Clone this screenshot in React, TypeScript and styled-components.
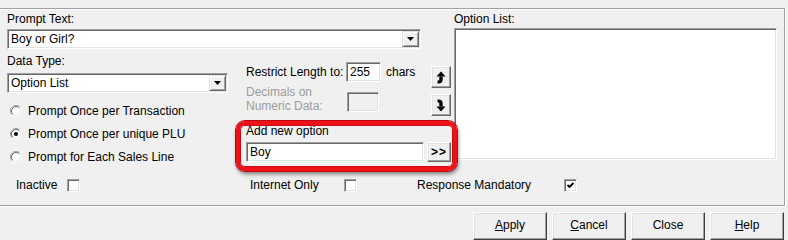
import React from "react";
import styled, { createGlobalStyle } from "styled-components";

const GlobalStyle = createGlobalStyle`
  html, body {
    margin: 0;
    padding: 0;
    background: #f0f0f0;
  }
  body {
    font-family: "Liberation Sans", Arial, sans-serif;
    font-size: 12px;
    color: #000;
  }
`;

const Page = styled.div`
  width: 788px;
  height: 240px;
  box-sizing: border-box;
  padding-top: 8px;
  overflow: hidden;
  background: #f0f0f0;
`;

const Frame = styled.div`
  position: relative;
  width: 785px;
  height: 198px;
  box-sizing: border-box;
  padding-left: 7px;
  border-top: 1px solid #a0a0a0;
  border-right: 1px solid #a0a0a0;
  border-bottom: 1px solid #a0a0a0;
  box-shadow: inset 0 1px 0 #fff, 1px 0 0 #fff, 0 1px 0 #fff;
  display: flex;
  flex-direction: column;
`;

const TopRow = styled.div`
  display: flex;
  align-items: flex-start;
`;

const Main = styled.div`
  width: 444px;
  padding-top: 3px;
  display: flex;
  flex-direction: column;
`;

const Label = styled.div<{ $mt?: number; $dim?: boolean }>`
  margin-top: ${({ $mt }) => $mt || 0}px;
  line-height: 14px;
  height: 14px;
  white-space: nowrap;
  color: ${({ $dim }) => ($dim ? "#a0a0a0" : "#000")};
`;

const Sunken = styled.div<{ $w: number; $h?: number; $mt?: number; $off?: boolean }>`
  width: ${({ $w }) => $w}px;
  height: ${({ $h }) => $h || 20}px;
  margin-top: ${({ $mt }) => $mt || 0}px;
  box-sizing: border-box;
  flex: none;
  display: flex;
  align-items: center;
  padding-left: 3px;
  background: ${({ $off }) => ($off ? "#f0f0f0" : "#fff")};
  border: 1px solid;
  border-color: #a0a0a0 #fff #fff #a0a0a0;
  box-shadow: inset 1px 1px 0 #696969, inset -1px -1px 0 #e3e3e3;
  line-height: 14px;
  white-space: nowrap;
`;

const ComboText = styled.span`
  flex: 1;
`;

const DropButton = styled.div`
  width: 17px;
  height: 16px;
  margin-right: 1px;
  box-sizing: border-box;
  display: flex;
  align-items: center;
  justify-content: center;
  background: #f0f0f0;
  border: 1px solid;
  border-color: #e3e3e3 #696969 #696969 #e3e3e3;
  box-shadow: inset 1px 1px 0 #fff, inset -1px -1px 0 #a0a0a0;
`;

const DataRow = styled.div`
  display: flex;
`;

const ColA = styled.div`
  width: 221px;
  display: flex;
  flex-direction: column;
`;

const RadioRow = styled.div<{ $mt?: number }>`
  height: 23px;
  margin-top: ${({ $mt }) => $mt || 0}px;
  display: flex;
  align-items: center;
  padding-left: 3px;
  gap: 6px;
  white-space: nowrap;
`;

const ColB = styled.div`
  margin-left: 18px;
  display: flex;
  flex-direction: column;
`;

const UpperB = styled.div`
  display: flex;
`;

const Fields = styled.div`
  width: 175px;
  display: flex;
  flex-direction: column;
`;

const FieldRow = styled.div<{ $mt: number; $top?: boolean }>`
  margin-top: ${({ $mt }) => $mt}px;
  display: flex;
  align-items: ${({ $top }) => ($top ? "flex-start" : "center")};
`;

const FieldLabel = styled.div<{ $w: number; $dim?: boolean }>`
  width: ${({ $w }) => $w}px;
  flex: none;
  line-height: 14px;
  white-space: nowrap;
  color: ${({ $dim }) => ($dim ? "#9c9c9c" : "#000")};
`;

const Unit = styled.span`
  margin-left: 5px;
`;

const Arrows = styled.div`
  margin-left: 10px;
  display: flex;
  flex-direction: column;
`;

const RaisedButton = styled.div<{ $w: number; $h: number; $mt?: number; $ml?: number }>`
  width: ${({ $w }) => $w}px;
  height: ${({ $h }) => $h}px;
  margin-top: ${({ $mt }) => $mt || 0}px;
  margin-left: ${({ $ml }) => $ml || 0}px;
  box-sizing: border-box;
  flex: none;
  display: flex;
  align-items: center;
  justify-content: center;
  background: #f0f0f0;
  border: 1px solid;
  border-color: #fff #696969 #696969 #fff;
  box-shadow: inset -1px -1px 0 #a0a0a0, inset 1px 1px 0 #e3e3e3;
  font-size: 12px;
  line-height: 14px;
`;

const ListCol = styled.div`
  margin-left: 3px;
  padding-top: 3px;
  display: flex;
  flex-direction: column;
`;

const ListBox = styled.div`
  width: 323px;
  height: 132px;
  margin-top: 2px;
  box-sizing: border-box;
  background: #fff;
  border: 1px solid;
  border-color: #a0a0a0 #fff #fff #a0a0a0;
  box-shadow: inset 1px 1px 0 #696969, inset -1px -1px 0 #e3e3e3;
`;

const BottomRow = styled.div`
  margin-top: 10px;
  padding-left: 9px;
  height: 14px;
  display: flex;
  align-items: center;
`;

const CheckField = styled.div<{ $w: number }>`
  width: ${({ $w }) => $w}px;
  flex: none;
  display: flex;
  align-items: center;
`;

const CheckBox = styled.div`
  width: 13px;
  height: 13px;
  box-sizing: border-box;
  flex: none;
  display: flex;
  align-items: center;
  justify-content: center;
  background: #fff;
  border: 1px solid;
  border-color: #a0a0a0 #fff #fff #a0a0a0;
  box-shadow: inset 1px 1px 0 #696969, inset -1px -1px 0 #e3e3e3;
`;

const Highlight = styled.div`
  position: absolute;
  left: 236px;
  top: 112px;
  width: 221px;
  height: 50px;
  box-sizing: border-box;
  border: 4px solid #f01018;
  border-radius: 9px;
  box-shadow: 0 0 0 1px #b80a10, 1px 3px 4px rgba(0, 0, 0, 0.5),
    inset 0 0 0 1px #c80c12;
  pointer-events: none;
`;

const ButtonRow = styled.div`
  margin-top: 6px;
  padding-right: 4px;
  display: flex;
  justify-content: flex-end;
  gap: 5px;
`;

const DialogButton = styled(RaisedButton)`
  border-color: #fff #404040 #404040 #fff;
  box-shadow: inset -1px -1px 0 #a0a0a0, inset 1px 1px 0 #e3e3e3;
  padding-bottom: 2px;
`;

const Bold = styled.span`
  font-weight: bold;
  letter-spacing: 1px;
`;

const Triangle = () => (
  <svg width="7" height="4" viewBox="0 0 7 4">
    <polygon points="0,0 7,0 3.5,4" fill="#000" />
  </svg>
);

const Combo: React.FC<{ w: number; mt?: number; value: string }> = ({ w, mt, value }) => (
  <Sunken $w={w} $mt={mt}>
    <ComboText>{value}</ComboText>
    <DropButton>
      <Triangle />
    </DropButton>
  </Sunken>
);

const Radio: React.FC<{ checked?: boolean }> = ({ checked }) => (
  <svg width="12" height="12" viewBox="0 0 12 12">
    <circle cx="6" cy="6" r="5" fill="#fff" />
    <path d="M2.11 9.89 A5.5 5.5 0 0 1 9.89 2.11" stroke="#a0a0a0" fill="none" />
    <path d="M2.82 9.18 A4.5 4.5 0 0 1 9.18 2.82" stroke="#696969" fill="none" />
    <path d="M2.11 9.89 A5.5 5.5 0 0 0 9.89 2.11" stroke="#fff" fill="none" />
    <path d="M2.82 9.18 A4.5 4.5 0 0 0 9.18 2.82" stroke="#e3e3e3" fill="none" />
    {checked && <circle cx="6" cy="6" r="2" fill="#000" />}
  </svg>
);

const Check = () => (
  <svg width="9" height="9" viewBox="0 0 9 9">
    <path d="M1.5 4 L3.5 6 L7.5 2" stroke="#000" strokeWidth="1.8" fill="none" />
  </svg>
);

const UpIcon = () => (
  <svg width="10" height="13" viewBox="0 0 10 13">
    <polygon points="0.5,5.5 5,0.5 9.5,5.5" fill="#000" />
    <path d="M3.3 5.5 H6.7 V8.5 Q6.7 12.5 2.5 12.5 H1.5 V9.5 H2.3 Q3.3 9.5 3.3 8.5 Z" fill="#000" />
  </svg>
);

const DownIcon = () => (
  <svg width="10" height="13" viewBox="0 0 10 13">
    <polygon points="0.5,7.5 5,12.5 9.5,7.5" fill="#000" />
    <path d="M3.3 7.5 H6.7 V4.5 Q6.7 0.5 2.5 0.5 H1.5 V3.5 H2.3 Q3.3 3.5 3.3 4.5 Z" fill="#000" />
  </svg>
);

const Field: React.FC<{ w: number; lw: number; label: string; checked?: boolean }> = ({
  w,
  lw,
  label,
  checked,
}) => (
  <CheckField $w={w}>
    <FieldLabel $w={lw}>{label}</FieldLabel>
    <CheckBox>{checked && <Check />}</CheckBox>
  </CheckField>
);

const App: React.FC = () => {
  return (
    <Page>
      <GlobalStyle />
      <Frame>
        <TopRow>
          <Main>
            <Label>Prompt Text:</Label>
            <Combo w={414} mt={3} value="Boy or Girl?" />
            <DataRow>
              <ColA>
                <Label $mt={5}>Data Type:</Label>
                <Combo w={221} mt={5} value="Option List" />
                <RadioRow $mt={6}>
                  <Radio />
                  Prompt Once per Transaction
                </RadioRow>
                <RadioRow>
                  <Radio checked />
                  Prompt Once per unique PLU
                </RadioRow>
                <RadioRow>
                  <Radio />
                  Prompt for Each Sales Line
                </RadioRow>
              </ColA>
              <ColB>
                <UpperB>
                  <Fields>
                    <FieldRow $mt={13}>
                      <FieldLabel $w={100}>Restrict Length to:</FieldLabel>
                      <Sunken $w={35}>255</Sunken>
                      <Unit>chars</Unit>
                    </FieldRow>
                    <FieldRow $mt={3} $top>
                      <FieldLabel $w={101} $dim>
                        Decimals on
                        <br />
                        Numeric Data:
                      </FieldLabel>
                      <Sunken $w={32} $mt={7} $off />
                    </FieldRow>
                  </Fields>
                  <Arrows>
                    <RaisedButton $w={20} $h={22} $mt={17}>
                      <UpIcon />
                    </RaisedButton>
                    <RaisedButton $w={20} $h={22} $mt={6}>
                      <DownIcon />
                    </RaisedButton>
                  </Arrows>
                </UpperB>
                <Label $mt={8}>Add new option</Label>
                <FieldRow $mt={4}>
                  <Sunken $w={178}>Boy</Sunken>
                  <RaisedButton $w={24} $h={20} $ml={3}>
                    <Bold>&gt;&gt;</Bold>
                  </RaisedButton>
                </FieldRow>
              </ColB>
            </DataRow>
          </Main>
          <ListCol>
            <Label>Option List:</Label>
            <ListBox />
          </ListCol>
        </TopRow>
        <BottomRow>
          <Field w={234} lw={51} label="Inactive" />
          <Field w={167} lw={94} label="Internet Only" />
          <Field w={170} lw={147} label="Response Mandatory" checked />
        </BottomRow>
        <Highlight />
      </Frame>
      <ButtonRow>
        <DialogButton $w={74} $h={28}>
          <span>
            <u>A</u>pply
          </span>
        </DialogButton>
        <DialogButton $w={74} $h={28}>
          <span>
            <u>C</u>ancel
          </span>
        </DialogButton>
        <DialogButton $w={74} $h={28}>
          <span>Close</span>
        </DialogButton>
        <DialogButton $w={74} $h={28}>
          <span>
            <u>H</u>elp
          </span>
        </DialogButton>
      </ButtonRow>
    </Page>
  );
};

export default App;
